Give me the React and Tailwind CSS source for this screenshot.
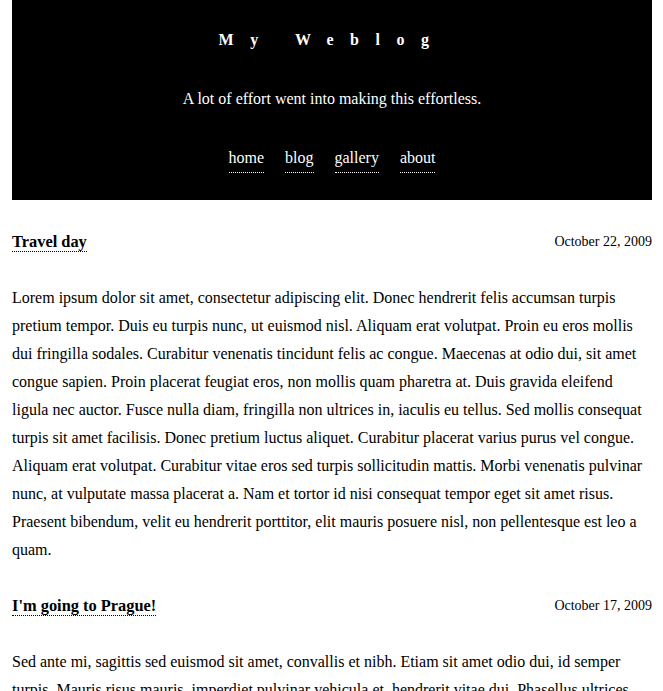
const posts = [
  {
    title: "Travel day",
    date: "October 22, 2009",
    body: "Lorem ipsum dolor sit amet, consectetur adipiscing elit. Donec hendrerit felis accumsan turpis pretium tempor. Duis eu turpis nunc, ut euismod nisl. Aliquam erat volutpat. Proin eu eros mollis dui fringilla sodales. Curabitur venenatis tincidunt felis ac congue. Maecenas at odio dui, sit amet congue sapien. Proin placerat feugiat eros, non mollis quam pharetra at. Duis gravida eleifend ligula nec auctor. Fusce nulla diam, fringilla non ultrices in, iaculis eu tellus. Sed mollis consequat turpis sit amet facilisis. Donec pretium luctus aliquet. Curabitur placerat varius purus vel congue. Aliquam erat volutpat. Curabitur vitae eros sed turpis sollicitudin mattis. Morbi venenatis pulvinar nunc, at vulputate massa placerat a. Nam et tortor id nisi consequat tempor eget sit amet risus. Praesent bibendum, velit eu hendrerit porttitor, elit mauris posuere nisl, non pellentesque est leo a quam.",
  },
  {
    title: "I'm going to Prague!",
    date: "October 17, 2009",
    body: "Sed ante mi, sagittis sed euismod sit amet, convallis et nibh. Etiam sit amet odio dui, id semper turpis. Mauris risus mauris, imperdiet pulvinar vehicula et, hendrerit vitae dui. Phasellus ultrices mauris vel nisi ornare tristique. Vestibulum ante ipsum primis in faucibus orci luctus et ultrices posuere cubilia curae.",
  },
];

const navLinks = ["home", "blog", "gallery", "about"];

export default function App() {
  return (
    <div className="min-h-screen bg-white pl-[12px] pr-[11px] font-['Liberation_Serif',serif] text-black">
      <header className="h-[200px] bg-black text-center text-white">
        <h1 className="pt-[26px] text-[16px] font-bold leading-[28px] tracking-[16.5px]">
          My Weblog
        </h1>
        <p className="mt-[31px] text-[16px] leading-[28px]">
          A lot of effort went into making this effortless.
        </p>
        <nav className="mt-[31px] flex justify-center gap-[21px] text-[16px] leading-[28px]">
          {navLinks.map((link) => (
            <a key={link} href="#" className="border-b border-dotted border-white">
              {link}
            </a>
          ))}
        </nav>
      </header>

      <main>
        {posts.map((post) => (
          <article key={post.title} className="pt-[28px]">
            <div className="flex h-[28px] items-center justify-between">
              <h2 className="text-[16.4px] font-bold leading-[28px]">
                <a href="#" className="border-b border-dotted border-black">
                  {post.title}
                </a>
              </h2>
              <span className="text-[14px] leading-[28px]">{post.date}</span>
            </div>
            <p className="mt-[28px] text-[16px] leading-[28px]">{post.body}</p>
          </article>
        ))}
      </main>
    </div>
  );
}
